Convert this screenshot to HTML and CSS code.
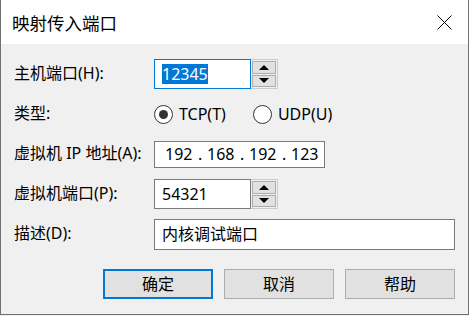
FILE: index.html
```html
<!DOCTYPE html>
<html lang="zh-CN">
<head>
  <meta charset="UTF-8">
  <title>映射传入端口</title>
  <link rel="stylesheet" href="styles.css">
</head>
<body>
  <div class="dialog">
    <div class="titlebar">
      <span class="title">映射传入端口</span>
      <span class="close">
        <svg width="15" height="15" viewBox="0 0 15 15">
          <path d="M0.5 0.5 L14.5 14.5 M14.5 0.5 L0.5 14.5" stroke="#000" stroke-width="1" fill="none"/>
        </svg>
      </span>
    </div>

    <div class="content">
      <div class="row">
        <div class="label">主机端口(H):</div>
        <div class="spinner">
          <div class="field focused"><span class="selected">12345</span></div>
          <div class="spin">
            <div class="spin-btn"><span class="arrow up"></span></div>
            <div class="spin-btn"><span class="arrow down"></span></div>
          </div>
        </div>
      </div>

      <div class="row">
        <div class="label">类型:</div>
        <div class="radios">
          <div class="radio-item"><span class="radio checked"></span>TCP(T)</div>
          <div class="radio-item"><span class="radio"></span>UDP(U)</div>
        </div>
      </div>

      <div class="row">
        <div class="label">虚拟机 IP 地址(A):</div>
        <div class="ip-box">
          <span class="oct">192</span><span class="dot">.</span>
          <span class="oct">168</span><span class="dot">.</span>
          <span class="oct">192</span><span class="dot">.</span>
          <span class="oct">123</span>
        </div>
      </div>

      <div class="row">
        <div class="label">虚拟机端口(P):</div>
        <div class="spinner">
          <div class="field">54321</div>
          <div class="spin">
            <div class="spin-btn"><span class="arrow up"></span></div>
            <div class="spin-btn"><span class="arrow down"></span></div>
          </div>
        </div>
      </div>

      <div class="row">
        <div class="label">描述(D):</div>
        <div class="text-box">内核调试端口</div>
      </div>

      <div class="buttons">
        <button class="btn default">确定</button>
        <button class="btn">取消</button>
        <button class="btn">帮助</button>
      </div>
    </div>
  </div>
</body>
</html>
```

FILE: styles.css
```css
html, body {
  margin: 0;
  padding: 0;
  background: #f0f0f0;
}

body {
  font-family: "Noto Sans", "Noto Sans CJK SC", sans-serif;
  font-size: 16px;
  color: #000;
}

.dialog {
  width: 467px;
  height: 314px;
  border-left: 1px solid #707070;
  border-right: 1px solid #707070;
  border-bottom: 1px solid #707070;
  background: #f0f0f0;
}

/* title bar */
.titlebar {
  height: 44px;
  background: #fff;
  display: flex;
  align-items: center;
  justify-content: space-between;
  padding-left: 11px;
}

.title {
  font-size: 17.5px;
  line-height: 20px;
  margin-top: 1px;
}

.close {
  width: 46px;
  height: 44px;
  display: flex;
  align-items: center;
  justify-content: center;
  margin-right: 1px;
}

.close svg {
  display: block;
}

/* form */
.content {
  padding: 10px 13px 0 13px;
}

.row {
  height: 40px;
  display: flex;
  align-items: center;
}

.label {
  width: 140px;
  flex-shrink: 0;
  line-height: 20px;
  margin-top: -2px;
}

.spinner {
  display: flex;
  height: 30px;
}

.field {
  width: 97px;
  height: 30px;
  box-sizing: border-box;
  border: 1px solid #7a7a7a;
  background: #fff;
  padding-left: 7px;
  display: flex;
  align-items: center;
  line-height: 20px;
}

.field.focused {
  border-color: #0078d7;
}

.selected {
  background: #0078d7;
  color: #fff;
}

.spin {
  width: 27px;
  height: 30px;
  box-sizing: border-box;
  border: 1px solid #cccccc;
  border-left: none;
  padding: 1px;
  display: flex;
  flex-direction: column;
  gap: 1px;
  background: #f0f0f0;
}

.spin-btn {
  flex: 1;
  border: 1px solid #adadad;
  background: #e1e1e1;
  display: flex;
  align-items: center;
  justify-content: center;
}

.arrow {
  width: 0;
  height: 0;
  border-left: 5px solid transparent;
  border-right: 5px solid transparent;
}

.arrow.up {
  border-bottom: 5px solid #000;
}

.arrow.down {
  border-top: 5px solid #000;
}

/* radio buttons */
.radios {
  display: flex;
  gap: 27px;
  line-height: 20px;
}

.radio-item {
  display: flex;
  align-items: center;
  gap: 6px;
}

.radio {
  width: 19px;
  height: 19px;
  box-sizing: border-box;
  border: 1px solid #333;
  border-radius: 50%;
  background: #fff;
  display: flex;
  align-items: center;
  justify-content: center;
}

.radio.checked::after {
  content: '';
  width: 9px;
  height: 9px;
  border-radius: 50%;
  background: #333;
}

/* ip address */
.ip-box {
  width: 171px;
  height: 27px;
  box-sizing: border-box;
  border: 1px solid #7a7a7a;
  background: #fff;
  display: flex;
  align-items: center;
  padding-left: 10px;
  line-height: 20px;
}

.oct {
  width: 32px;
}

.dot {
  width: 10px;
  padding-left: 1px;
  box-sizing: border-box;
}

.text-box {
  width: 301px;
  height: 31px;
  box-sizing: border-box;
  border: 1px solid #7a7a7a;
  background: #fff;
  padding-left: 7px;
  display: flex;
  align-items: center;
  line-height: 20px;
}

/* dialog buttons */
.buttons {
  display: flex;
  justify-content: flex-end;
  gap: 11px;
  margin-top: 15px;
}

.btn {
  width: 110px;
  height: 30px;
  border: 1px solid #adadad;
  background: #e1e1e1;
  font-family: inherit;
  font-size: 16px;
  color: #000;
  padding: 0;
  line-height: 20px;
}

.btn.default {
  border: 2px solid #0078d7;
}
```
